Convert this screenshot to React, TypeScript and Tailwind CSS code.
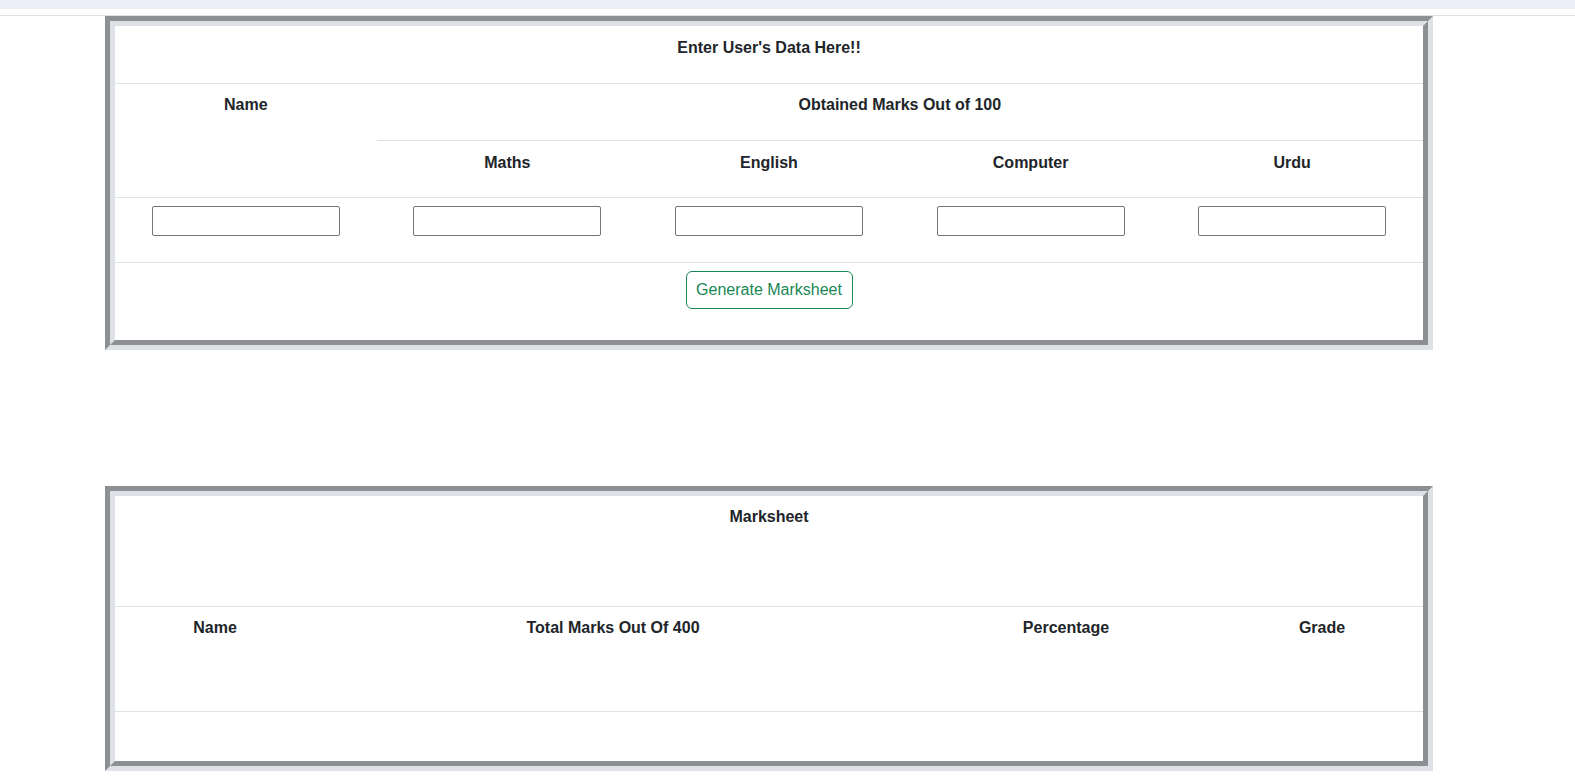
import React from "react";

const cell = "flex justify-center font-bold text-[#212529]";

function Groove({ children, className }: { children: React.ReactNode; className?: string }) {
  // two nested borders give the table's groove look
  return (
    <div className={`ml-[105px] w-[1328px] border-[5px] border-t-[#8e8f93] border-l-[#8e8f93] border-b-[#dee2e6] border-r-[#dee2e6] ${className ?? ""}`}>
      <div className="border-[5px] border-t-[#dee2e6] border-l-[#dee2e6] border-b-[#8e8f93] border-r-[#8e8f93] bg-white">
        {children}
      </div>
    </div>
  );
}

export default function App() {
  const subjects = ["Maths", "English", "Computer", "Urdu"];

  return (
    <div className="min-h-screen bg-white text-[16px] leading-6 text-[#212529]" style={{ fontFamily: '"Liberation Sans", Arial, sans-serif' }}>
      <div className="h-[9px] bg-[#ebeef7]" />
      <div className="h-[7px] border-b border-[#e0e0e0]" />

      {/* Input form */}
      <Groove>
        <div className="h-[58px] border-b border-[#dee2e6] pt-[10px] font-bold text-center">Enter User's Data Here!!</div>

        <div className="grid grid-cols-5 border-b border-[#dee2e6]">
          <div className={`${cell} row-span-2 pt-[9px]`}>Name</div>
          <div className={`${cell} col-span-4 h-[57px] border-b border-[#dee2e6] pt-[9px]`}>
            Obtained Marks Out of 100
          </div>
          {subjects.map(s => (
            <div key={s} className={`${cell} h-[56px] pt-[10px]`}>{s}</div>
          ))}
        </div>

        <div className="grid h-[65px] grid-cols-5 items-start border-b border-[#dee2e6] pt-[8px]">
          {["name", ...subjects].map(k => (
            <div key={k} className="flex justify-center">
              <input type="text" className="h-[30px] w-[188px] rounded-[2px] border border-[#767676] bg-white px-1 outline-none" />
            </div>
          ))}
        </div>

        <div className="flex h-[77px] justify-center pt-[8px]">
          <button className="h-[38px] w-[167px] rounded-[6px] border border-[#198754] bg-white text-[16px] text-[#198754]">
            Generate Marksheet
          </button>
        </div>
      </Groove>

      {/* Result */}
      <Groove className="mt-[136px]">
        <div className="h-[111px] border-b border-[#dee2e6] pt-[9px] text-center font-bold">Marksheet</div>
        <div className="grid h-[105px] grid-cols-[200px_596px_310px_202px] border-b border-[#dee2e6] pt-[9px]">
          <div className={cell}>Name</div>
          <div className={cell}>Total Marks Out Of 400</div>
          <div className={cell}>Percentage</div>
          <div className={cell}>Grade</div>
        </div>
        <div className="h-[49px]" />
      </Groove>
    </div>
  );
}
